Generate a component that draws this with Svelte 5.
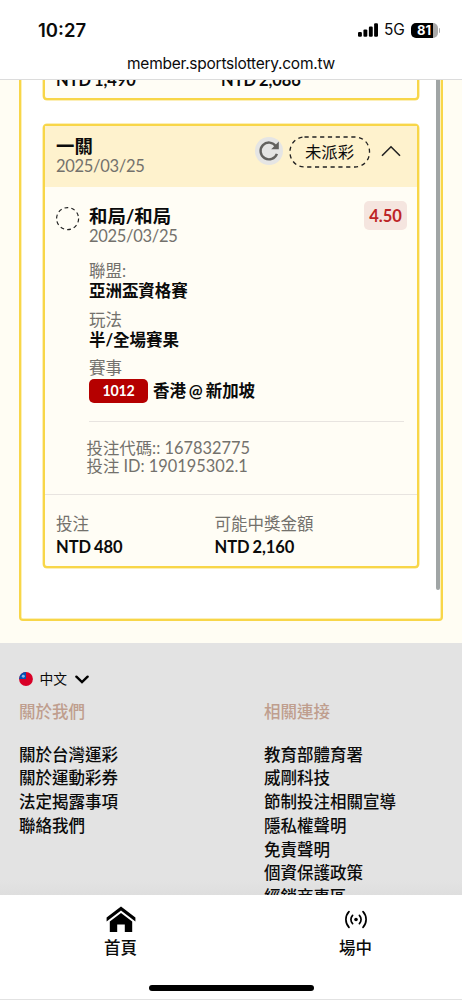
<script lang="ts">
  const details = [
    { label: '聯盟:', value: '亞洲盃資格賽' },
    { label: '玩法', value: '半/全場賽果' },
  ];

  const columns = [
    {
      title: '關於我們',
      links: ['關於台灣運彩', '關於運動彩券', '法定揭露事項', '聯絡我們'],
    },
    {
      title: '相關連接',
      links: ['教育部體育署', '威剛科技', '節制投注相關宣導', '隱私權聲明', '免責聲明', '個資保護政策', '經銷商專區'],
    },
  ];
</script>

<div class="screen">
  <header class="browser">
    <div class="status">
      <span class="time">10:27</span>
      <div class="indicators">
        <svg width="20" height="14" viewBox="0 0 20.6 14">
          <rect x="0" y="9" width="4" height="5" rx="1.2" />
          <rect x="5.6" y="6.4" width="4" height="7.6" rx="1.2" />
          <rect x="11.2" y="3.4" width="4" height="10.6" rx="1.2" />
          <rect x="16.6" y="0" width="4" height="14" rx="1.2" />
        </svg>
        <span class="network">5G</span>
        <div class="battery"><span>81</span></div>
        <i class="battery-tip"></i>
      </div>
    </div>
    <div class="url">member.sportslottery.com.tw</div>
  </header>

  <main class="content">
    <div class="panel">
      <div class="bets">
        <section class="card">
          <div class="totals wide">
            <div class="stake"><b>NTD 1,490</b></div>
            <div><b>NTD 2,086</b></div>
          </div>
        </section>

        <section class="card">
          <div class="card-head">
            <div class="card-title">
              <h3>一關</h3>
              <p class="date">2025/03/25</p>
            </div>
            <button class="refresh" aria-label="refresh">
              <svg width="22" height="22" viewBox="0 0 22 22" fill="none" stroke="#63625f" stroke-width="2.4">
                <path d="M18.9 13.8A8.4 8.4 0 1 1 17.9 6.2" />
                <path d="M20.8 1.6V9.2H13.2Z" fill="#63625f" stroke="none" />
              </svg>
            </button>
            <span class="status-pill">
              <svg width="82" height="32" viewBox="0 0 82 32">
                <rect x="1" y="1" width="79.5" height="30" rx="14.5" />
              </svg>
              <span>未派彩</span>
            </span>
            <svg class="collapse" width="20" height="12" viewBox="0 0 20 12" fill="none" stroke="#222" stroke-width="1.6">
              <path d="M1 10.8L10 1.8L19 10.8" />
            </svg>
          </div>

          <div class="selection">
            <svg class="ring" width="24" height="24" viewBox="0 0 24 24" fill="none" stroke="#222" stroke-width="1.2">
              <circle cx="11.6" cy="11.6" r="11" stroke-dasharray="3.8 3.11" />
            </svg>
            <div class="selection-body">
              <div class="pick">
                <div>
                  <h3>和局/和局</h3>
                  <p class="date">2025/03/25</p>
                </div>
                <span class="odds">4.50</span>
              </div>
              {#each details as item}
                <div class="detail">
                  <p>{item.label}</p>
                  <b>{item.value}</b>
                </div>
              {/each}
              <div class="detail">
                <p>賽事</p>
                <div class="match"><span class="match-no">1012</span><b>香港 @ 新加坡</b></div>
              </div>
              <div class="codes">
                <p>投注代碼:: 167832775</p>
                <p>投注 ID: 190195302.1</p>
              </div>
            </div>
          </div>

          <div class="totals">
            <div class="stake"><p>投注</p><b>NTD 480</b></div>
            <div><p>可能中獎金額</p><b>NTD 2,160</b></div>
          </div>
        </section>
      </div>
      <div class="scrollbar"></div>
    </div>
  </main>

  <footer class="footer">
    <div class="language">
      <svg width="14" height="14" viewBox="0 0 15 15">
        <circle cx="7.5" cy="7.5" r="7.4" fill="#d80027" />
        <path d="M7.5 0.1A7.4 7.4 0 0 0 0.1 7.5H7.5Z" fill="#0052b4" />
        <circle cx="4.6" cy="4.6" r="1.6" fill="#8fb6e6" />
      </svg>
      <span>中文</span>
      <svg width="14" height="9" viewBox="0 0 14 9" fill="none" stroke="#000" stroke-width="2.4" stroke-linecap="round">
        <path d="M1.4 1.7L7 7.1L12.6 1.7" />
      </svg>
    </div>
    <div class="link-columns">
      {#each columns as column}
        <div class="link-column">
          <h4>{column.title}</h4>
          {#each column.links as link}
            <a href="#/">{link}</a>
          {/each}
        </div>
      {/each}
    </div>
  </footer>

  <nav class="tabs">
    <div class="tab-row">
      <div class="tab">
        <svg width="30" height="27" viewBox="0 0 30 27">
          <path d="M15 0.5L29.4 11.6V15.4L15 4.6L0.6 15.4V11.6Z" />
          <path d="M15 7L26.2 15.4V26H18.8V18.6H11.2V26H3.8V15.4Z" />
        </svg>
        <span>首頁</span>
      </div>
      <div class="tab">
        <svg width="30" height="27" viewBox="0 0 30 27" fill="none" stroke="#000" stroke-width="1.7" stroke-linecap="round">
          <circle cx="15" cy="13.5" r="1.8" fill="#000" stroke="none" />
          <path d="M11.6 9.3A6.1 6.1 0 0 0 11.6 17.7M18.4 9.3A6.1 6.1 0 0 1 18.4 17.7" />
          <path d="M8 5.6A11.6 11.6 0 0 0 8 21.4M22 5.6A11.6 11.6 0 0 1 22 21.4" />
        </svg>
        <span>場中</span>
      </div>
    </div>
    <div class="home-bar"></div>
  </nav>
</div>

<style>
  :global(body) {
    margin: 0;
  }
  .screen {
    width: 462px;
    height: 1000px;
    overflow: hidden;
    display: flex;
    flex-direction: column;
    background: #fff;
    color: #0b0b0b;
    font-family: Lato, 'Noto Sans CJK TC', sans-serif;
    font-size: 16.5px;
    line-height: 20px;
  }
  h3, h4, p {
    margin: 0;
  }
  svg {
    display: block;
    flex: none;
  }

  .browser {
    flex: none;
    height: 79px;
    border-bottom: 1px solid #dcdcdc;
    font-family: Inter, sans-serif;
  }
  .status {
    display: flex;
    justify-content: space-between;
    align-items: center;
    height: 20px;
    padding: 20px 22px 13px 38px;
  }
  .time {
    font-size: 18.5px;
    font-weight: 600;
  }
  .indicators {
    display: flex;
    align-items: center;
  }
  .network {
    margin-left: 6px;
    font-size: 15.5px;
    letter-spacing: -0.3px;
  }
  .battery {
    width: 27px;
    height: 15px;
    margin-left: 6px;
    border-radius: 5px;
    background: linear-gradient(90deg, #000 81%, #a9a9a9 81%);
    color: #fff;
    font-size: 13px;
    font-weight: 700;
    line-height: 15px;
    text-align: center;
  }
  .battery-tip {
    width: 1.5px;
    height: 5px;
    margin-left: 1px;
    border-radius: 0 2px 2px 0;
    background: #a9a9a9;
  }
  .url {
    font-size: 15.5px;
    letter-spacing: -0.25px;
    text-align: center;
    padding-top: 1px;
  }

  .content {
    flex: none;
    height: 563px;
    box-sizing: border-box;
    padding: 0 19px 22px;
    display: flex;
    flex-direction: column;
    justify-content: flex-end;
    overflow: hidden;
    background: #fffdf3;
  }
  .panel {
    flex: none;
    display: flex;
    border: 2px solid #f8d648;
    border-radius: 4px;
    box-shadow: inset 0 0 0 0.5px #f9e070;
    background: #fff;
  }
  .bets {
    flex: 1;
    display: flex;
    flex-direction: column;
    gap: 24px;
    padding: 0 17px 51px 22px;
  }
  .scrollbar {
    width: 4px;
    margin: 0 1px 29px 0;
    border-radius: 0 0 2px 2px;
    background: #a0a5a5;
  }

  .card {
    border: 2px solid #f8d648;
    border-radius: 4px;
    box-shadow: 0 0 0 0.5px #f9e070;
    background: #fffdf5;
  }
  .card p {
    color: #73716c;
  }
  .card b {
    display: block;
    letter-spacing: -0.05px;
    word-spacing: -1px;
  }
  .card h3 {
    font-size: 18.4px;
    line-height: 20px;
  }
  .card .date {
    letter-spacing: -0.3px;
  }
  .card-head {
    display: flex;
    align-items: flex-start;
    height: 51px;
    padding: 10px 16px 0 11px;
    background: #fef2cd;
  }
  .card-title {
    flex: 1;
  }
  .refresh {
    display: grid;
    place-items: center;
    width: 28px;
    height: 28px;
    margin: 1px 6px 0 0;
    padding: 0;
    border: 0;
    border-radius: 50%;
    background: #e5e5e4;
  }
  .status-pill {
    display: grid;
    place-items: center;
    margin-right: 10.5px;
    font-size: 16.4px;
  }
  .status-pill > * {
    grid-area: 1 / 1;
  }
  .status-pill rect {
    fill: none;
    stroke: #222;
    stroke-width: 1.3;
    stroke-dasharray: 4.2 3.6;
  }
  .collapse {
    margin-top: 9px;
  }

  .selection {
    display: flex;
    height: 307px;
    border-bottom: 1px solid #e8e4e0;
  }
  .ring {
    margin: 20px 9px 0 11px;
  }
  .selection-body {
    flex: 1;
    padding: 19px 13px 0 0;
  }
  .pick {
    display: flex;
    justify-content: space-between;
    margin-bottom: 15px;
  }
  .odds {
    width: 43px;
    height: 29px;
    margin: -5px -3px 0 0;
    border-radius: 5px;
    background: #f5e5df;
    color: #bd2426;
    font-size: 16.5px;
    font-weight: 700;
    line-height: 30px;
    text-align: center;
  }
  .detail {
    margin-bottom: 8.5px;
  }
  .match {
    display: flex;
    align-items: center;
    gap: 5px;
    margin-top: 1px;
  }
  .match-no {
    width: 59px;
    height: 24px;
    border-radius: 5px;
    background: #b50000;
    color: #fff;
    font-size: 14.2px;
    font-weight: 700;
    letter-spacing: -0.2px;
    line-height: 24px;
    text-align: center;
  }
  .codes {
    margin-top: 18px;
    padding-top: 16.5px;
    border-top: 1px solid #e8e4e0;
    font-size: 16.4px;
    line-height: 18px;
  }
  .codes p {
    margin-left: -2.5px;
  }

  .totals {
    display: flex;
    height: 53px;
    padding: 18px 11px 0;
    line-height: 22.5px;
  }
  .stake {
    width: 158.5px;
  }
  .wide {
    height: 32px;
    padding-top: 0;
    line-height: 28px;
  }
  .wide .stake {
    width: 165px;
  }

  .footer {
    flex: none;
    height: 252px;
    box-sizing: border-box;
    padding: 26px 19px 0;
    overflow: hidden;
    background: linear-gradient(#e3e3e3 94%, #dedede);
  }
  .language {
    display: flex;
    align-items: center;
    height: 20px;
    font-size: 13.8px;
  }
  .language span {
    margin: 0 8px 0 6.5px;
  }
  .link-columns {
    display: flex;
    padding-top: 11px;
  }
  .link-column {
    width: 245px;
    flex: none;
    display: flex;
    flex-direction: column;
    font-weight: 500;
  }
  .link-column h4 {
    margin-bottom: 19.7px;
    color: #bf9e8e;
    font-size: 16.5px;
    line-height: 24px;
    font-weight: 500;
  }
  .link-column a {
    color: #0b0b0b;
    text-decoration: none;
    line-height: 23.7px;
  }

  .tabs {
    flex: 1;
    display: flex;
    flex-direction: column;
    background: #fff;
    border-bottom: 1px solid #e2e2e2;
  }
  .tab-row {
    height: 90px;
    display: flex;
    padding-left: 3px;
  }
  .tab {
    flex: none;
    width: 235px;
    display: flex;
    flex-direction: column;
    align-items: center;
    padding-top: 11px;
    font-weight: 500;
  }
  .tab span {
    margin-top: 5px;
  }
  .home-bar {
    align-self: center;
    width: 165px;
    height: 6px;
    border-radius: 3px;
    background: #000;
  }
</style>
